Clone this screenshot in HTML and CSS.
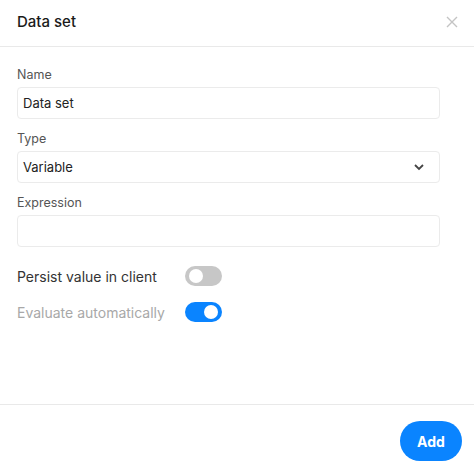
FILE: index.html
```html
<!DOCTYPE html>
<html>
<head>
<meta charset="utf-8">
<link rel="stylesheet" href="styles.css">
</head>
<body>
<div class="dialog">
  <div class="header">
    <div class="title">Data set</div>
    <svg class="close" width="12" height="12" viewBox="0 0 12 12"><path d="M1 1L11 11M11 1L1 11" stroke="#c4c4c4" stroke-width="1.4" fill="none"/></svg>
  </div>
  <div class="content">
    <div class="field">
      <div class="label">Name</div>
      <div class="input">Data set</div>
    </div>
    <div class="field">
      <div class="label">Type</div>
      <div class="input select"><span>Variable</span>
        <svg width="12" height="8" viewBox="0 0 12 8"><path d="M2 2L6 6L10 2" stroke="#444" stroke-width="1.8" fill="none"/></svg>
      </div>
    </div>
    <div class="field">
      <div class="label">Expression</div>
      <div class="input"></div>
    </div>
    <div class="toggles">
      <div class="trow">
        <span class="tlabel">Persist value in client</span>
        <span class="switch off"><span class="knob"></span></span>
      </div>
      <div class="trow">
        <span class="tlabel disabled">Evaluate automatically</span>
        <span class="switch on"><span class="knob"></span></span>
      </div>
    </div>
  </div>
  <div class="footer">
    <button class="add">Add</button>
  </div>
</div>
</body>
</html>
```
FILE: styles.css
```css
html, body { margin: 0; padding: 0; background: #fff; }
body { font-family: Inter, "Noto Sans", sans-serif; color: #222; }
.dialog { display: flex; flex-direction: column; height: 473px; }
.header {
  border-bottom: 1px solid #e9e9e9;
  display: flex; align-items: center; justify-content: space-between;
  padding: 0 16px 4px 17px; box-sizing: border-box; height: 47px;
}
.title { font-size: 15px; font-weight: 500; color: #1a1a1a; }
.close { margin-top: 2px; }
.content { flex: 1; padding: 20px 34px 0 17px; display: flex; flex-direction: column; }
.field { display: flex; flex-direction: column; margin-bottom: 12px; }
.label { font-size: 12.5px; line-height: 16px; color: #555; margin-bottom: 4px; }
.input {
  height: 32px; box-sizing: border-box; border: 1px solid #ebebeb; border-radius: 4px;
  padding: 0 5px; font-size: 13px; color: #222; display: flex; align-items: center;
}
.select { justify-content: space-between; padding-right: 14px; }
.toggles { display: flex; flex-direction: column; gap: 16px; margin-top: 7px; }
.trow { display: flex; align-items: center; height: 20px; }
.tlabel { width: 168px; font-size: 14px; color: #333; }
.tlabel.disabled { color: #a8a8a8; }
.switch { width: 37px; height: 20px; border-radius: 10px; position: relative; box-sizing: border-box; }
.switch.off { background: #c7c7c7; }
.switch.on { background: #0a84ff; }
.knob { position: absolute; top: 3px; width: 14px; height: 14px; border-radius: 50%; background: #fff; }
.off .knob { left: 4px; }
.on .knob { right: 4px; }
.footer {
  border-top: 1px solid #e9e9e9; display: flex; justify-content: flex-end;
  padding: 16px 12px 12px 0;
}
.add {
  width: 62px; height: 40px; border: none; border-radius: 20px; background: #0a84ff;
  color: #fff; font-family: Inter, sans-serif; font-weight: 700; font-size: 14px; padding: 0;
}
```
